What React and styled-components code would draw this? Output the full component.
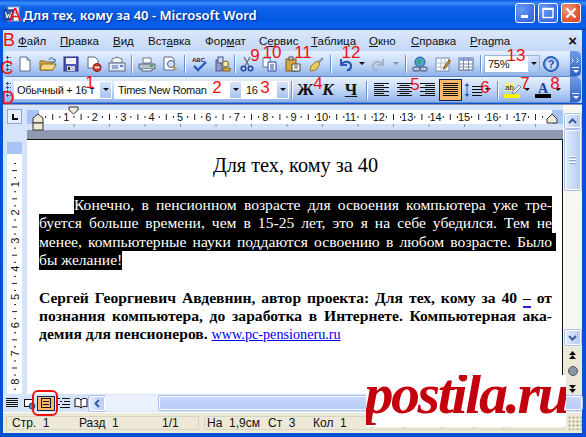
import React from 'react';
import styled, { createGlobalStyle } from 'styled-components';

const GlobalStyle = createGlobalStyle`
    html, body {
        margin: 0;
        padding: 0;
        background: #fff;
    }
    #root {
        width: 586px;
        height: 437px;
        overflow: hidden;
    }
`;

const Window = styled.div`
    position: relative;
    width: 586px;
    height: 437px;
    overflow: hidden;
    display: flex;
    flex-direction: column;
    box-sizing: border-box;
    padding: 0 4px 4px 3px;
    background: linear-gradient(#0a5ce6, #0553d8 60px, #0a4fd2);
    font-family: "Liberation Sans", Arial, sans-serif;
`;

const TitleBar = styled.div`
    height: 29px;
    flex: none;
    display: flex;
    align-items: center;
    margin: 0 -4px 0 -3px;
    padding: 0 5px 1px 3px;
    background: linear-gradient(#0a58e0 0, #3d8cf8 3px, #0d62e8 7px, #0358e2 20px, #0a5ff0 27px, #0549c4 29px);
`;

const TitleIcon = styled.svg`
    width: 17px;
    height: 17px;
    flex: none;
`;

const TitleText = styled.div`
    margin-left: 3px;
    flex: 1;
    color: #fff;
    font-family: "Noto Sans", sans-serif;
    font-weight: 600;
    font-size: 13px;
    white-space: nowrap;
    text-shadow: 1px 1px 1px #0a2a90;
`;

const WinButton = styled.div`
    width: 20px;
    height: 20px;
    box-sizing: border-box;
    margin-left: 3px;
    margin-top: -4px;
    border: 1px solid #fff;
    border-radius: 3px;
    display: flex;
    align-items: center;
    justify-content: center;
    background: ${(p) => (p.$close
        ? 'radial-gradient(circle at 30% 30%, #f09a80, #d9512c 70%)'
        : 'radial-gradient(circle at 30% 30%, #6a9cf4, #3a68e0 75%)')};
    svg { display: block; }
`;

const Chrome = styled.div`
    flex: none;
    background: linear-gradient(#dce8fb, #c3d8f7 20px, #b8d0f4 70px);
`;

const MenuBar = styled.div`
    height: 21px;
    display: flex;
    align-items: center;
    font-size: 11.5px;
    color: #111;
    padding-right: 5px;
`;

const MenuHandle = styled.div`
    width: 15px;
    flex: none;
`;

const MenuItem = styled.span`
    width: ${(p) => p.$w}px;
    flex: none;
    white-space: nowrap;
    u { text-underline-offset: 1px; }
`;

const CloseX = styled.span`
    margin-left: auto;
    font-size: 15px;
    font-weight: 700;
    line-height: 1;
    color: #111;
`;

const ToolRow = styled.div`
    height: ${(p) => p.$h}px;
    margin-right: 1px;
    margin-left: 1px;
    display: flex;
    align-items: center;
    box-sizing: border-box;
    padding-left: 2px;
    border-radius: 3px 5px 5px 3px;
    background: linear-gradient(#e6f0fd, #c8dcf9 45%, #8fb2ea);
    border-bottom: 1px solid #5f87c9;
    overflow: hidden;
`;

const Grip = styled.div`
    width: 5px;
    height: 15px;
    flex: none;
    margin-right: ${(p) => p.$gap}px;
    background-image: radial-gradient(circle at 1.5px 1.5px, #274f95 1.1px, transparent 1.4px);
    background-size: 4px 4px;
`;

const Tool = styled.div`
    width: ${(p) => p.$w || 23}px;
    height: 22px;
    flex: none;
    display: flex;
    align-items: center;
    justify-content: center;
    svg { display: block; }
`;

const Mirror = styled.span`
    display: block;
    transform: scaleX(-1);
`;

const Separator = styled.div`
    width: 1px;
    height: 18px;
    flex: none;
    margin: 0 ${(p) => p.$m ?? 4}px;
    background: #6a8fcb;
    box-shadow: 1px 0 0 #fff;
`;

const Drop = styled.span`
    width: 0;
    height: 0;
    flex: none;
    border-left: 3px solid transparent;
    border-right: 3px solid transparent;
    border-top: 3px solid ${(p) => p.$dim || '#111'};
    margin: 0 ${(p) => p.$m ?? 5}px;
`;

const Combo = styled.div`
    width: ${(p) => p.$w}px;
    height: 18px;
    flex: none;
    margin-right: ${(p) => p.$gap ?? 2}px;
    box-sizing: border-box;
    display: flex;
    align-items: center;
    background: #fff;
    border: 1px solid ${(p) => p.$line || '#fff'};
    font-size: 11px;
    letter-spacing: -0.3px;
    color: #111;
`;

const ComboText = styled.span`
    flex: 1;
    padding-left: ${(p) => p.$pad || 2}px;
    white-space: nowrap;
    overflow: hidden;
`;

const ComboArrow = styled.span`
    width: 11px;
    height: 100%;
    flex: none;
    display: flex;
    align-items: center;
    justify-content: center;
    background: linear-gradient(#d6e4fa, #a7c3f0);
`;

const Overflow = styled.div`
    width: 11px;
    height: 100%;
    flex: none;
    margin-left: auto;
    display: flex;
    flex-direction: column;
    align-items: center;
    justify-content: flex-end;
    gap: 2px;
    padding-bottom: 3px;
    box-sizing: border-box;
    background: linear-gradient(#6f9ce6, #2e62c4);
    border-radius: 0 4px 4px 0;
`;

const OverflowBar = styled.span`
    width: 7px;
    height: 1px;
    background: #fff;
`;

const OverflowChevrons = styled.svg`
    display: block;
    margin-bottom: 2px;
`;

const FormatLetter = styled.span`
    font-family: "Liberation Serif", serif;
    font-size: 17px;
    font-weight: 700;
    font-style: ${(p) => (p.$italic ? 'italic' : 'normal')};
    text-decoration: ${(p) => (p.$under ? 'underline' : 'none')};
    color: #111;
    line-height: 1;
`;

const ActiveTool = styled(Tool)`
    box-sizing: border-box;
    height: 22px;
    background: #fdb869;
    border: 1px solid #0a246a;
`;

const Workspace = styled.div`
    flex: 1;
    min-height: 0;
    display: grid;
    grid-template-columns: 24px 536px 1fr;
    grid-template-rows: 25px 9px 1fr;
    background: #d6e4fb;
    margin-top: 1px;
    border-top: 1px solid #8a94aa;
`;

const CornerCell = styled.div`
    grid-row: 1 / 3;
    padding: 4px 0 0 4px;
`;

const TabBox = styled.div`
    width: 15px;
    height: 15px;
    box-sizing: border-box;
    background: #e4eefc;
    border: 1px solid #8aa4d4;
    display: flex;
    align-items: center;
    justify-content: center;
    &::after {
        content: '';
        width: 4px;
        height: 4px;
        border-left: 2px solid #111;
        border-bottom: 2px solid #111;
    }
`;

const RulerSvg = styled.svg`
    display: block;
    font-family: "Liberation Sans", sans-serif;
`;

const HRulerCell = styled.div`
    position: relative;
    z-index: 1;
    grid-column: 2;
    grid-row: 1;
    overflow: visible;
`;

const GreyBand = styled.div`
    grid-column: 2;
    grid-row: 2;
    background: #8f9ab2;
`;

const VRulerCell = styled.div`
    grid-column: 1;
    grid-row: 3;
    padding-left: 4px;
    padding-top: 3px;
`;

const VScroll = styled.div`
    grid-column: 3;
    grid-row: 1 / 4;
    display: flex;
    flex-direction: column;
    align-items: center;
    box-sizing: border-box;
    padding-top: 9px;
    background: linear-gradient(#f7f6ef 0, #f7f6ef 241px, #ece9d8 242px);
`;

const ScrollButton = styled.div`
    width: 16px;
    height: ${(p) => p.$h || 15}px;
    margin-top: ${(p) => p.$top || 0}px;
    flex: none;
    box-sizing: border-box;
    border: 1px solid #fff;
    border-radius: 2px;
    background: linear-gradient(90deg, #e1eafe, #b5cbf5);
    box-shadow: 0 0 0 1px #a9c0ea;
    display: flex;
    align-items: center;
    justify-content: center;
`;

const ScrollThumb = styled(ScrollButton)`
    flex-direction: column;
    gap: 1px;
`;

const GripLine = styled.span`
    width: 7px;
    height: 1px;
    background: #fff;
    box-shadow: 0 1px 0 #8aa6dc;
    margin-bottom: 1px;
`;

const Browse = styled.div`
    height: ${(p) => p.$h}px;
    margin-top: ${(p) => p.$top || 0}px;
    flex: none;
    display: flex;
    align-items: center;
    justify-content: center;
`;

const Page = styled.div`
    grid-column: 2;
    grid-row: 3;
    box-sizing: border-box;
    background: #fff;
    border-top: 1px solid #111;
    border-right: 1px solid #111;
    padding: 15px 0 0 12px;
    font-family: "Liberation Serif", "Times New Roman", serif;
    color: #000;
    overflow: hidden;
`;

const Heading = styled.div`
    width: 513px;
    height: 21px;
    margin-bottom: 20px;
    text-align: center;
    font-size: 20.3px;
    line-height: 20px;
`;

const Para = styled.div`
    width: 520px;
    font-size: 15.6px;
    line-height: 18.4px;
    font-weight: ${(p) => (p.$bold ? 700 : 400)};
    margin-bottom: 19px;
`;

const Line = styled.div`
    width: ${(p) => (p.$free ? 'fit-content' : `${513 - (p.$indent || 0)}px`)};
    height: 18.4px;
    margin-left: ${(p) => p.$indent || 0}px;
    padding-right: ${(p) => p.$mark || 0}px;
    white-space: nowrap;
    text-align: ${(p) => (p.$free ? 'left' : 'justify')};
    text-align-last: ${(p) => (p.$free ? 'left' : 'justify')};
    background: ${(p) => (p.$selected ? '#000' : 'transparent')};
    color: ${(p) => (p.$selected ? '#fff' : '#000')};
`;

const Field = styled.span`
    border-bottom: 2px solid #2222ee;
`;

const DocLink = styled.a`
    color: #0000ee;
    font-weight: 400;
    font-size: 14.2px;
    text-decoration: underline;
`;

const HScrollRow = styled.div`
    flex: none;
    height: 18px;
    display: flex;
    align-items: center;
    padding-left: 0;
    background: #d6e4fb;
`;

const ViewButton = styled.div`
    width: 17px;
    height: 15px;
    flex: none;
    display: flex;
    align-items: center;
    justify-content: center;
    svg { display: block; }
`;

const ActiveView = styled(ViewButton)`
    width: 18px;
    box-sizing: border-box;
    background: #fdb869;
    border: 1px solid #0a246a;
`;

const HTrack = styled.div`
    width: 54px;
    height: 16px;
    flex: none;
    background-color: #f6f8fe;
    background-image: radial-gradient(#dde7fb 0.6px, transparent 0.8px);
    background-size: 2px 2px;
`;

const HThumb = styled.div`
    flex: 1;
    height: 14px;
    margin-right: 0;
    padding-right: 62px;
    box-sizing: border-box;
    border: 1px solid #fff;
    border-radius: 2px;
    background: linear-gradient(#c6d8fa, #b7cdf6);
    box-shadow: 0 0 0 1px #a9c0ea;
    display: flex;
    align-items: center;
    justify-content: flex-end;
    gap: 1px;
`;

const HGrip = styled.span`
    width: 1px;
    height: 7px;
    background: #fff;
    box-shadow: 1px 0 0 #8aa6dc;
    margin-right: 1px;
`;

const StatusBar = styled.div`
    flex: none;
    height: 21px;
    display: flex;
    padding: 3px 0 3px 3px;
    box-sizing: border-box;
    background: #ece9d8;
    font-size: 12px;
    color: #111;
    border-top: 1px solid #fff;
    margin-top: 0;
`;

const StatusCell = styled.div`
    width: ${(p) => p.$w}px;
    flex: none;
    margin-right: ${(p) => p.$gap ?? 1}px;
    display: flex;
    align-items: center;
    box-sizing: border-box;
    border: 1px solid #d8d4c0;
    padding-left: ${(p) => p.$pad ?? 5}px;
    white-space: pre;
    overflow: hidden;
`;

const StatusItem = styled.span`
    width: ${(p) => p.$w}px;
    flex: none;
`;

const SizeGrip = styled.div`
    width: 14px;
    height: 14px;
    margin-left: auto;
    background-image: radial-gradient(circle at 1.5px 1.5px, #bdb9a4 1.2px, transparent 1.4px);
    background-size: 4px 4px;
`;

const Mark = styled.span`
    position: absolute;
    left: ${(p) => p.$x}px;
    top: ${(p) => p.$y}px;
    transform: translate(-50%, -50%);
    color: #f01010;
    font-family: "Liberation Sans", sans-serif;
    font-size: ${(p) => p.$size || 17}px;
    line-height: 1;
    white-space: nowrap;
    pointer-events: none;
`;

const RedRing = styled.div`
    position: absolute;
    left: 32px;
    top: 390px;
    width: 26px;
    height: 26px;
    box-sizing: border-box;
    border: 2px solid #f01010;
    border-radius: 6px;
`;

const Watermark = styled.div`
    position: absolute;
    left: 366px;
    top: 375px;
    width: 200px;
    height: 52px;
    background: #fff;
    display: flex;
    align-items: flex-start;
    justify-content: center;
    overflow: hidden;
`;

const WatermarkText = styled.span`
    font-family: "Liberation Serif", serif;
    font-weight: 700;
    font-style: italic;
    font-size: 58px;
    letter-spacing: -2.4px;
    line-height: 38px;
    color: #c4000f;
`;

// small toolbar drawings
const Ico = ({ children, w = 16, h = 16 }) => (
    <svg width={w} height={h} viewBox={`0 0 ${w} ${h}`}>{children}</svg>
);

const NewDoc = () => (
    <Ico>
        <path d="M3 1h7l3 3v11H3z" fill="#fff" stroke="#5a6a88" />
        <path d="M10 1v3h3" fill="#dfe8f6" stroke="#5a6a88" />
    </Ico>
);

const OpenFolder = () => (
    <Ico w={18}>
        <path d="M1 5h5l1 1h6v8H1z" fill="#d8b04e" stroke="#8a6a1c" />
        <path d="M3 8h14l-3 6H1z" fill="#f6da86" stroke="#8a6a1c" />
        <path d="M10 4c1-3 4-3 5 0l1-1v3h-3" fill="none" stroke="#2a5ab0" />
    </Ico>
);

const Save = () => (
    <Ico>
        <rect x="1" y="1" width="14" height="14" fill="#4e55b8" stroke="#2a2f78" />
        <rect x="3" y="2" width="10" height="6" fill="#eef0fa" />
        <rect x="4" y="10" width="8" height="5" fill="#c8ccd8" />
        <rect x="5" y="11" width="2" height="3" fill="#333" />
    </Ico>
);

const Permission = () => (
    <Ico>
        <path d="M2 1h7l3 3v8H2z" fill="#fff" stroke="#5a6a88" />
        <circle cx="11" cy="11.5" r="4" fill="#d8342a" stroke="#8a1a14" />
        <rect x="8.5" y="10.7" width="5" height="1.6" fill="#fff" />
    </Ico>
);

const Mail = () => (
    <Ico w={18}>
        <path d="M4 7V3l5-2 5 2v4z" fill="#f4f4f4" stroke="#6a7488" />
        <rect x="1" y="7" width="16" height="8" fill="#e4e8f0" stroke="#5a6a88" />
        <path d="M4 10h6M4 12h6" stroke="#4a6aa8" />
        <rect x="12" y="9" width="3" height="2" fill="#4a8ad8" />
    </Ico>
);

const Printer = () => (
    <Ico w={18}>
        <path d="M5 7V2h8v5z" fill="#fff" stroke="#6a7488" />
        <path d="M1 8h16v5H1z" fill="#b8c0cc" stroke="#5a6478" />
        <path d="M4 13v2h10v-2" fill="#e8eaf0" stroke="#5a6478" />
        <rect x="12" y="9" width="3" height="2" fill="#3aa84a" />
    </Ico>
);

const Preview = () => (
    <Ico>
        <path d="M2 1h8l2 2v11H2z" fill="#fff" stroke="#5a6a88" />
        <circle cx="9" cy="8" r="3.5" fill="#cfe2fa" stroke="#4a5a78" />
        <path d="M11.5 10.5l3 3.5" stroke="#c89a30" strokeWidth="2" />
    </Ico>
);

const Spell = () => (
    <Ico w={18}>
        <text x="1" y="6" fontSize="6" fontWeight="700" fill="#222" fontFamily="Liberation Sans">ABC</text>
        <path d="M3 10l4 4 8-8" fill="none" stroke="#2a5ab8" strokeWidth="2.4" />
    </Ico>
);

const Research = () => (
    <Ico>
        <rect x="1" y="4" width="6" height="11" fill="#8e9ac8" stroke="#4a5488" />
        <rect x="3" y="1" width="5" height="6" fill="#cfd6ee" stroke="#4a5488" />
        <circle cx="10.5" cy="8" r="3" fill="#f6e8a0" stroke="#6a6030" />
        <path d="M8 12h7v3H8z" fill="#e0b040" stroke="#7a5a18" />
    </Ico>
);

const Cut = () => (
    <Ico>
        <path d="M5 1l5 9M11 1L6 10" stroke="#6a7488" strokeWidth="1.4" fill="none" />
        <circle cx="4.5" cy="12.5" r="2.3" fill="none" stroke="#24459a" strokeWidth="1.5" />
        <circle cx="11.5" cy="12.5" r="2.3" fill="none" stroke="#24459a" strokeWidth="1.5" />
    </Ico>
);

const Copy = () => (
    <Ico>
        <path d="M1 2h7v9H1z" fill="#fff" stroke="#5a7ab0" />
        <path d="M6 6h8v9H6z" fill="#fff" stroke="#24459a" />
        <path d="M8 9h4M8 11h4M8 13h4" stroke="#24459a" />
    </Ico>
);

const Paste = () => (
    <Ico>
        <rect x="1" y="3" width="10" height="12" fill="#d8a838" stroke="#7a5a18" />
        <rect x="4" y="1" width="4" height="3" fill="#ccc" stroke="#555" />
        <path d="M7 8h8v7H7z" fill="#fff" stroke="#444" />
        <path d="M9 10h4M9 12h4" stroke="#555" />
    </Ico>
);

const Painter = () => (
    <Ico>
        <path d="M15 2l-6 6" stroke="#8a94a8" strokeWidth="2.4" />
        <path d="M9 5l3 3-4 6-6 1 1-5z" fill="#ecc860" stroke="#9a7a28" />
    </Ico>
);

const Undo = ({ color = '#2a5ab8' }) => (
    <Ico>
        <path d="M3 3v6h6" fill="none" stroke={color} strokeWidth="2" />
        <path d="M3 9c3-5 11-4 10 2-.3 1.800-2 3-4 3.500" fill="none" stroke={color} strokeWidth="2.2" />
    </Ico>
);

const GlobeLink = () => (
    <Ico w={18}>
        <circle cx="9" cy="6" r="5" fill="#4aa0d8" stroke="#2a5a88" />
        <path d="M6 3l3 1 1 3-3 1z" fill="#3aa84a" />
        <rect x="2" y="11" width="7" height="4" rx="2" fill="none" stroke="#6a7488" strokeWidth="1.4" />
        <rect x="9" y="11" width="7" height="4" rx="2" fill="none" stroke="#6a7488" strokeWidth="1.4" />
    </Ico>
);

const DrawTable = () => (
    <Ico>
        <rect x="1" y="2" width="13" height="13" fill="#fff" stroke="#7a8aa8" />
        <path d="M1 7h13M1 11h13M6 2v13M10 2v13" stroke="#b0bcd0" />
        <path d="M9 11l5-7 1.500 1-5 7-2 1z" fill="#e8a040" stroke="#7a5018" />
    </Ico>
);

const TableIcon = () => (
    <Ico>
        <rect x="1" y="2" width="14" height="12" fill="#fff" stroke="#5a6a88" />
        <rect x="1" y="2" width="14" height="3" fill="#8fa8d8" />
        <path d="M1 8h14M1 11h14M5.500 2v12M10.500 2v12" stroke="#7a8aa8" />
    </Ico>
);

const Help = () => (
    <Ico w={18} h={18}>
        <circle cx="9" cy="9" r="7.500" fill="#4a86e0" stroke="#1e4aa8" />
        <circle cx="9" cy="9" r="5.500" fill="#cfe0fa" />
        <text x="9" y="13" textAnchor="middle" fontSize="11" fontWeight="700" fill="#1e4aa8" fontFamily="Liberation Sans">?</text>
    </Ico>
);

const AlignLines = ({ kind }) => {
    const rows = [0, 1, 2, 3, 4, 5, 6];
    return (
        <Ico w={17} h={14}>
            {rows.map((r) => {
                const short = r % 2 === 1 && kind !== 'full';
                const len = short ? 10 : 15;
                const x = kind === 'left' || kind === 'full' ? 1 : kind === 'center' ? 1 + (15 - len) / 2 : 16 - len;
                return <rect key={r} x={x} y={r * 2} width={len} height="1" fill="#111" />;
            })}
        </Ico>
    );
};

const LineSpacing = () => (
    <Ico w={19}>
        <path d="M3 1l2.500 3h-5zM3 15l2.500-3h-5z" fill="#2a5ab8" />
        <path d="M3 4v8" stroke="#2a5ab8" />
        <path d="M8 4.500h10M8 7.500h10M8 10.500h10M8 13.500h10" stroke="#111" />
    </Ico>
);

const Highlight = () => (
    <Ico w={18}>
        <rect x="1" y="1" width="9" height="8" fill="#f8f070" />
        <text x="1" y="8" fontSize="8" fill="#222" fontFamily="Liberation Sans">ab</text>
        <path d="M9 9l6-6 2 2-6 6-3 1z" fill="#e8ecf6" stroke="#7a8aa8" />
        <rect x="0" y="12" width="16" height="4" fill="#fff200" />
    </Ico>
);

const FontColor = () => (
    <Ico w={18}>
        <text x="9" y="11" textAnchor="middle" fontSize="14" fontWeight="700" fill="#24459a" fontFamily="Liberation Serif">A</text>
        <rect x="1" y="12" width="16" height="4" fill="#000" />
    </Ico>
);

const HRuler = () => {
    const unit = 28.4;
    const zero = 11;
    const nums = Array.from({ length: 17 }, (_, i) => i + 1);
    const quarter = Array.from({ length: 72 }, (_, i) => i);
    const tabs = Array.from({ length: 14 }, (_, i) => i + 1);
    return (
        <RulerSvg width="536" height="34" viewBox="0 0 536 34">
            <rect x="0" y="5" width="12" height="14" fill="#a9c3f2" />
            <rect x="12" y="5" width="513" height="14" fill="#fff" />
            <rect x="525" y="5" width="11" height="14" fill="#a9c3f2" />
            {quarter.map((q) => {
                const x = zero + (q * unit) / 4;
                if (q % 4 === 0 || x > 525) return null;
                return q % 2 === 0
                    ? <rect key={q} x={x} y="9" width="1" height="6" fill="#222" />
                    : <rect key={q} x={x} y="11" width="1" height="2" fill="#222" />;
            })}
            {nums.map((n) => (
                <g key={n}>
                    <rect x={zero + n * unit - 5} y="6" width="10" height="12" fill="#fff" />
                    <text x={zero + n * unit} y="16" textAnchor="middle" fontSize="11" fill="#111">{n}</text>
                </g>
            ))}
            {tabs.map((t) => (
                <rect key={t} x={zero + t * 35.5} y="19" width="1" height="3" fill="#8f8f8f" />
            ))}
            <path d="M42 2h9v3l-4.500 4-4.500-4z" fill="#ece9d8" stroke="#333" />
            <path d="M11 9l5 4v5H6v-5z" fill="#ece9d8" stroke="#333" />
            <rect x="6" y="18" width="10" height="7" fill="#ece9d8" stroke="#333" />
            <path d="M525 9l5 5v4h-10v-4z" fill="#ece9d8" stroke="#333" />
        </RulerSvg>
    );
};

const VRuler = () => {
    const unit = 28.2;
    const zero = 14;
    const nums = Array.from({ length: 8 }, (_, i) => i + 1);
    const ticks = Array.from({ length: 36 }, (_, i) => i);
    return (
        <RulerSvg width="15" height="255" viewBox="0 0 15 255">
            <rect x="0" y="0" width="15" height="12" fill="#a9c3f2" />
            <rect x="0" y="12" width="15" height="243" fill="#fff" />
            {ticks.map((t) => {
                if (t % 4 === 0) return null;
                const y = zero + (t * unit) / 4;
                return t % 2 === 0
                    ? <rect key={t} x="5" y={y} width="5" height="1" fill="#222" />
                    : <rect key={t} x="7" y={y} width="2" height="1" fill="#222" />;
            })}
            {nums.map((n) => (
                <text
                    key={n}
                    x="0"
                    y="0"
                    fontSize="11"
                    fill="#111"
                    textAnchor="middle"
                    transform={`translate(11.500 ${zero + n * unit}) rotate(-90)`}
                >
                    {n}
                </text>
            ))}
        </RulerSvg>
    );
};

const viewIcons = {
    normal: <path d="M1 2.500h12M1 4.500h12M1 6.500h12M1 8.500h12M1 10.500h12" stroke="#111" />,
    web: (
        <>
            <rect x="2.500" y="3.500" width="9" height="7" fill="#fff" stroke="#111" />
            <circle cx="10" cy="10" r="3" fill="#4a86c8" stroke="#1e4a88" />
        </>
    ),
    print: (
        <>
            <rect x="2.500" y="2.500" width="9" height="9" fill="none" stroke="#111" />
            <path d="M4 5.500h6M4 8.500h6" stroke="#111" />
        </>
    ),
    outline: <path d="M1 2.500h2M5 2.500h8M3 5.500h2M7 5.500h6M1 8.500h2M5 8.500h8M3 11.500h10" stroke="#111" />,
    read: (
        <>
            <path d="M1 3c2-1 4-1 6 1 2-2 4-2 6-1v8c-2-1-4-1-6 1-2-2-4-2-6-1z" fill="#fff" stroke="#111" />
            <path d="M7 4v8" stroke="#111" />
        </>
    ),
};

const ViewIcon = ({ name }) => <Ico w={14} h={14}>{viewIcons[name]}</Ico>;

const marks = [
    ['A', 15, 14, 19], ['B', 9, 40, 18], ['C', 7, 68, 18], ['D', 8, 98, 18],
    ['1', 90, 82], ['2', 217, 87], ['3', 265, 87], ['4', 318, 83],
    ['5', 415, 84], ['6', 485, 87], ['7', 525, 83], ['8', 555, 83],
    ['9', 255, 55], ['10', 272, 52], ['11', 303, 52], ['12', 351, 52], ['13', 516, 55],
];

const App = () => (
    <>
        <GlobalStyle />
        <Window>
            <TitleBar>
                <TitleIcon viewBox="0 0 17 17">
                    <rect x="5" y="1" width="11" height="14" fill="#fff" stroke="#8aa0c8" />
                    <path d="M7 4h7M7 7h7M7 10h7" stroke="#6a8ac8" />
                    <rect x="1" y="4" width="9" height="10" fill="#2a58b8" stroke="#1a3478" />
                    <path d="M2.500 6l1.500 6 1.500-4 1.500 4 1.500-6" fill="none" stroke="#fff" />
                </TitleIcon>
                <TitleText>Для тех, кому за 40 - Microsoft Word</TitleText>
                <WinButton>
                    <svg width="12" height="12" viewBox="0 0 12 12"><rect x="2" y="8" width="7" height="3" fill="#fff" /></svg>
                </WinButton>
                <WinButton>
                    <svg width="12" height="12" viewBox="0 0 12 12"><rect x="1" y="1.500" width="10" height="9" fill="none" stroke="#fff" strokeWidth="1.400" /><rect x="1" y="1" width="10" height="2" fill="#fff" /></svg>
                </WinButton>
                <WinButton $close>
                    <svg width="12" height="12" viewBox="0 0 12 12"><path d="M1.500 1.500l9 9M10.500 1.500l-9 9" stroke="#fff" strokeWidth="2.200" /></svg>
                </WinButton>
            </TitleBar>

            <Chrome>
                <MenuBar>
                    <MenuHandle />
                    <MenuItem $w={42}><u>Ф</u>айл</MenuItem>
                    <MenuItem $w={53}><u>П</u>равка</MenuItem>
                    <MenuItem $w={35}><u>В</u>ид</MenuItem>
                    <MenuItem $w={57}>Вст<u>а</u>вка</MenuItem>
                    <MenuItem $w={54}>Фор<u>м</u>ат</MenuItem>
                    <MenuItem $w={52}>С<u>е</u>рвис</MenuItem>
                    <MenuItem $w={58}><u>Т</u>аблица</MenuItem>
                    <MenuItem $w={42}><u>О</u>кно</MenuItem>
                    <MenuItem $w={59}><u>С</u>правка</MenuItem>
                    <MenuItem $w={50}><u>P</u>ragma</MenuItem>
                    <CloseX>×</CloseX>
                </MenuBar>

                <ToolRow $h={26}>
                    <Grip $gap={2} />
                    <Tool><NewDoc /></Tool>
                    <Tool><OpenFolder /></Tool>
                    <Tool><Save /></Tool>
                    <Tool><Permission /></Tool>
                    <Tool><Mail /></Tool>
                    <Separator $m={3} />
                    <Tool><Printer /></Tool>
                    <Tool><Preview /></Tool>
                    <Separator $m={3} />
                    <Tool><Spell /></Tool>
                    <Tool><Research /></Tool>
                    <Separator $m={0} />
                    <Tool><Cut /></Tool>
                    <Tool><Copy /></Tool>
                    <Tool><Paste /></Tool>
                    <Tool><Painter /></Tool>
                    <Separator $m={3} />
                    <Tool><Undo /></Tool>
                    <Drop $m={2} />
                    <Tool $w={22}><Mirror><Undo color="#aab4c8" /></Mirror></Tool>
                    <Drop $m={4} $dim="#8a94a8" />
                    <Separator $m={2} />
                    <Tool><GlobeLink /></Tool>
                    <Tool><DrawTable /></Tool>
                    <Tool><TableIcon /></Tool>
                    <Separator $m={3} />
                    <Combo $w={56} $line="#9ab4e0" $gap={0}>
                        <ComboText $pad={3}>75%</ComboText>
                        <ComboArrow><Drop $m={0} /></ComboArrow>
                    </Combo>
                    <Tool $w={21}><Help /></Tool>
                    <Overflow>
                        <OverflowChevrons width="9" height="5" viewBox="0 0 9 5">
                            <path d="M0.500 0.500l2 2-2 2M5.500 0.500l2 2-2 2" fill="none" stroke="#fff" />
                        </OverflowChevrons>
                        <OverflowBar />
                        <Drop $m={0} $dim="#fff" />
                    </Overflow>
                </ToolRow>

                <ToolRow $h={26}>
                    <Grip $gap={3} />
                    <Combo $w={98}>
                        <ComboText>Обычный + 16 т</ComboText>
                        <ComboArrow><Drop $m={0} /></ComboArrow>
                    </Combo>
                    <Combo $w={128} $gap={0}>
                        <ComboText $pad={3}>Times New Roman</ComboText>
                        <ComboArrow><Drop $m={0} /></ComboArrow>
                    </Combo>
                    <Combo $w={47} $gap={0}>
                        <ComboText $pad={3}>16</ComboText>
                        <ComboArrow><Drop $m={0} /></ComboArrow>
                    </Combo>
                    <Separator $m={2} />
                    <Tool><FormatLetter>Ж</FormatLetter></Tool>
                    <Tool $w={22}><FormatLetter $italic>К</FormatLetter></Tool>
                    <Tool $w={24}><FormatLetter $under>Ч</FormatLetter></Tool>
                    <Separator $m={3} />
                    <Tool><AlignLines kind="left" /></Tool>
                    <Tool><AlignLines kind="center" /></Tool>
                    <Tool><AlignLines kind="right" /></Tool>
                    <ActiveTool><AlignLines kind="full" /></ActiveTool>
                    <Tool $w={22}><LineSpacing /></Tool>
                    <Drop $m={1} />
                    <Separator $m={5} />
                    <Tool $w={20}><Highlight /></Tool>
                    <Drop $m={1} />
                    <Tool $w={24}><FontColor /></Tool>
                    <Drop $m={0} />
                    <Overflow>
                        <OverflowBar />
                        <Drop $m={0} $dim="#fff" />
                    </Overflow>
                </ToolRow>
            </Chrome>

            <Workspace>
                <CornerCell><TabBox /></CornerCell>
                <HRulerCell><HRuler /></HRulerCell>
                <GreyBand />
                <VRulerCell><VRuler /></VRulerCell>
                <Page>
                    <Heading>Для тех, кому за 40</Heading>
                    <Para>
                        <Line $selected $indent={35}>Конечно, в пенсионном возрасте для освоения компьютера уже тре-</Line>
                        <Line $selected>буется больше времени, чем в 15-25 лет, это я на себе убедился. Тем не</Line>
                        <Line $selected $mark={4}>менее, компьютерные науки поддаются освоению в любом возрасте. Было</Line>
                        <Line $selected $free>бы желание!</Line>
                    </Para>
                    <Para $bold>
                        <Line>Сергей Георгиевич Авдевнин, автор проекта: Для тех, кому за 40 <Field>–</Field> от</Line>
                        <Line>познания компьютера, до заработка в Интернете. Компьютерная ака-</Line>
                        <Line $free>демия для пенсионеров. <DocLink>www.pc-pensioneru.ru</DocLink></Line>
                    </Para>
                </Page>
                <VScroll>
                    <ScrollButton $h={14}>
                        <svg width="9" height="6" viewBox="0 0 9 6"><path d="M1 5l3.500-3.500L8 5" fill="none" stroke="#3a5a98" strokeWidth="2" /></svg>
                    </ScrollButton>
                    <ScrollThumb $h={60} $top={2}>
                        <GripLine />
                        <GripLine />
                        <GripLine />
                    </ScrollThumb>
                    <ScrollButton $h={15} $top={140}>
                        <svg width="9" height="6" viewBox="0 0 9 6"><path d="M1 1l3.500 3.500L8 1" fill="none" stroke="#3a5a98" strokeWidth="2" /></svg>
                    </ScrollButton>
                    <Browse $h={14} $top={3}>
                        <svg width="9" height="9" viewBox="0 0 9 9"><path d="M4.500 0L8 4H1zM4.500 4L8 8H1z" fill="#111" /></svg>
                    </Browse>
                    <Browse $h={16} $top={1}>
                        <svg width="10" height="10" viewBox="0 0 10 10"><circle cx="5" cy="5" r="4.500" fill="#8a94a8" stroke="#555" /></svg>
                    </Browse>
                    <Browse $h={16} $top={1}>
                        <svg width="9" height="9" viewBox="0 0 9 9"><path d="M4.500 9L8 5H1zM4.500 5L8 1H1z" fill="#111" /></svg>
                    </Browse>
                </VScroll>
            </Workspace>

            <HScrollRow>
                <ViewButton><ViewIcon name="normal" /></ViewButton>
                <ViewButton><ViewIcon name="web" /></ViewButton>
                <ActiveView><ViewIcon name="print" /></ActiveView>
                <ViewButton><ViewIcon name="outline" /></ViewButton>
                <ViewButton><ViewIcon name="read" /></ViewButton>
                <ScrollButton $h={15}>
                    <svg width="6" height="9" viewBox="0 0 6 9"><path d="M5 1L1.500 4.500 5 8" fill="none" stroke="#3a5a98" strokeWidth="2" /></svg>
                </ScrollButton>
                <HTrack />
                <HThumb>
                    <HGrip /><HGrip /><HGrip /><HGrip />
                </HThumb>
            </HScrollRow>

            <StatusBar>
                <StatusCell $w={193} $gap={5}>
                    <StatusItem $w={67}>Стр.  1</StatusItem>
                    <StatusItem $w={83}>Разд  1</StatusItem>
                    <StatusItem $w={30}>1/1</StatusItem>
                </StatusCell>
                <StatusCell $w={167} $pad={2}>
                    <StatusItem $w={61}>На  1,9см</StatusItem>
                    <StatusItem $w={45}>Ст  3</StatusItem>
                    <StatusItem $w={50}>Кол  1</StatusItem>
                </StatusCell>
                <StatusCell $w={32} />
                <StatusCell $w={36} />
                <StatusCell $w={32} />
                <StatusCell $w={29} />
                <StatusCell $w={60} $gap={0} />
                <SizeGrip />
            </StatusBar>

            <RedRing />
            <Watermark><WatermarkText>postila.ru</WatermarkText></Watermark>
            {marks.map(([label, x, y, size]) => (
                <Mark key={label} $x={x} $y={y} $size={size}>{label}</Mark>
            ))}
        </Window>
    </>
);

export default App;
